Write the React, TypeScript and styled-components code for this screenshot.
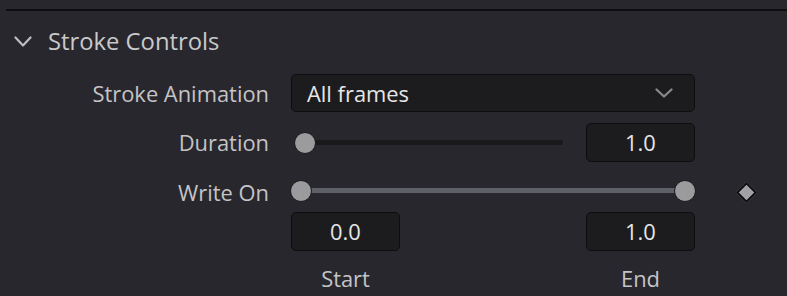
import styled, {createGlobalStyle} from "styled-components";

const GlobalStyle = createGlobalStyle`
  html, body {
    margin: 0;
    padding: 0;
    background: #28272d;
  }
  body {
    font-family: "Open Sans", "Noto Sans", sans-serif;
    -webkit-font-smoothing: antialiased;
  }
`;

const Panel = styled.div`
  width: 787px;
  height: 296px;
  background: #28272d;
  padding-top: 9px;
  box-sizing: border-box;
  overflow: hidden;
`;

const Divider = styled.div`
  margin-left: 6px;
  height: 2px;
  background: #0e0e10;
`;

const Header = styled.div`
  display: flex;
  align-items: center;
  height: 40px;
  margin-top: 10px;
  padding-left: 14px;
  gap: 16px;
`;

const Title = styled.span`
  font-size: 23.8px;
  color: #c9c9cb;
`;

const Form = styled.div`
  display: grid;
  grid-template-columns: 269px 404px 70px;
  column-gap: 22px;
  margin-top: 13px;
`;

const Label = styled.div<{$h: number; $mt?: number}>`
  height: ${(p) => p.$h}px;
  margin-top: ${(p) => p.$mt ?? 0}px;
  display: flex;
  align-items: center;
  justify-content: flex-end;
  font-size: 21.9px;
  color: #c4c4c6;
`;

const Cell = styled.div<{$h: number; $mt?: number}>`
  height: ${(p) => p.$h}px;
  margin-top: ${(p) => p.$mt ?? 0}px;
  display: flex;
  align-items: center;
  justify-content: space-between;
`;

const Side = styled.div<{$h: number; $mt?: number}>`
  height: ${(p) => p.$h}px;
  margin-top: ${(p) => p.$mt ?? 0}px;
  display: flex;
  align-items: center;
  padding-left: 22px;
`;

const Select = styled.div`
  flex: 1;
  height: 38px;
  box-sizing: border-box;
  display: flex;
  align-items: center;
  justify-content: space-between;
  padding: 0 21px 0 15px;
  background: #1c1c1e;
  border: 1px solid #0d0d0f;
  border-radius: 5px;
  font-size: 21.9px;
  color: #e6e6e6;
`;

const NumBox = styled.div`
  width: 109px;
  height: 39px;
  box-sizing: border-box;
  display: flex;
  align-items: center;
  justify-content: center;
  background: #1c1c1e;
  border: 1px solid #0d0d0f;
  border-radius: 5px;
  font-size: 21.9px;
  color: #e6e6e6;
`;

const Slider = styled.div<{$w: string}>`
  position: relative;
  width: ${(p) => p.$w};
  height: 22px;
`;

const Track = styled.div<{$color: string; $left: number; $right: number}>`
  position: absolute;
  left: ${(p) => p.$left}px;
  right: ${(p) => p.$right}px;
  top: 8px;
  height: 5px;
  border-radius: 3px;
  background: ${(p) => p.$color};
`;

const Knob = styled.div`
  position: absolute;
  top: 0;
  width: 20px;
  height: 20px;
  border-radius: 50%;
  background: #9b9b9d;
  border: 1px solid #1a1a1c;
  transform: translateX(-50%);
`;

const Diamond = styled.div`
  width: 11px;
  height: 11px;
  background: #a2a2a6;
  border: 2px solid #0c0c0e;
  transform: rotate(45deg);
`;

const Caption = styled.div`
  width: 109px;
  text-align: center;
  font-size: 21.9px;
  color: #c4c4c6;
`;

const Chevron = ({color, w, h}: {color: string; w: number; h: number}) => (
  <svg width={w} height={h} viewBox={`0 0 ${w} ${h}`} fill="none">
    <path
      d={`M1.5 1.5 L${w / 2} ${h - 1.5} L${w - 1.5} 1.5`}
      stroke={color}
      strokeWidth="2.2"
      strokeLinecap="round"
      strokeLinejoin="round"
    />
  </svg>
);

export default function App() {
  return (
    <>
      <GlobalStyle />
      <Panel>
        <Divider />
        <Header>
          <Chevron color="#bdbdbf" w={18} h={11} />
          <Title>Stroke Controls</Title>
        </Header>
        <Form>
          <Label $h={38}>Stroke Animation</Label>
          <Cell $h={38}>
            <Select>
              All frames
              <Chevron color="#8a8a8c" w={18} h={10} />
            </Select>
          </Cell>
          <Side $h={38} />

          <Label $h={39} $mt={11}>Duration</Label>
          <Cell $h={39} $mt={11}>
            <Slider $w="275px">
              <Track $color="#19191b" $left={4} $right={3} />
              <Knob style={{left: 14}} />
            </Slider>
            <NumBox>1.0</NumBox>
          </Cell>
          <Side $h={39} $mt={11} />

          <Label $h={40} $mt={10}>Write On</Label>
          <Cell $h={40} $mt={10}>
            <Slider $w="100%" style={{marginTop: -2}}>
              <Track $color="#5e6167" $left={10} $right={10} />
              <Knob style={{left: 10}} />
              <Knob style={{left: 394}} />
            </Slider>
          </Cell>
          <Side $h={40} $mt={10}>
            <Diamond />
          </Side>

          <Label $h={39} $mt={0} />
          <Cell $h={39} $mt={0}>
            <NumBox>0.0</NumBox>
            <NumBox>1.0</NumBox>
          </Cell>
          <Side $h={39} $mt={0} />

          <Label $h={30} $mt={12} />
          <Cell $h={30} $mt={12}>
            <Caption>Start</Caption>
            <Caption>End</Caption>
          </Cell>
          <Side $h={30} $mt={12} />
        </Form>
      </Panel>
    </>
  );
}
